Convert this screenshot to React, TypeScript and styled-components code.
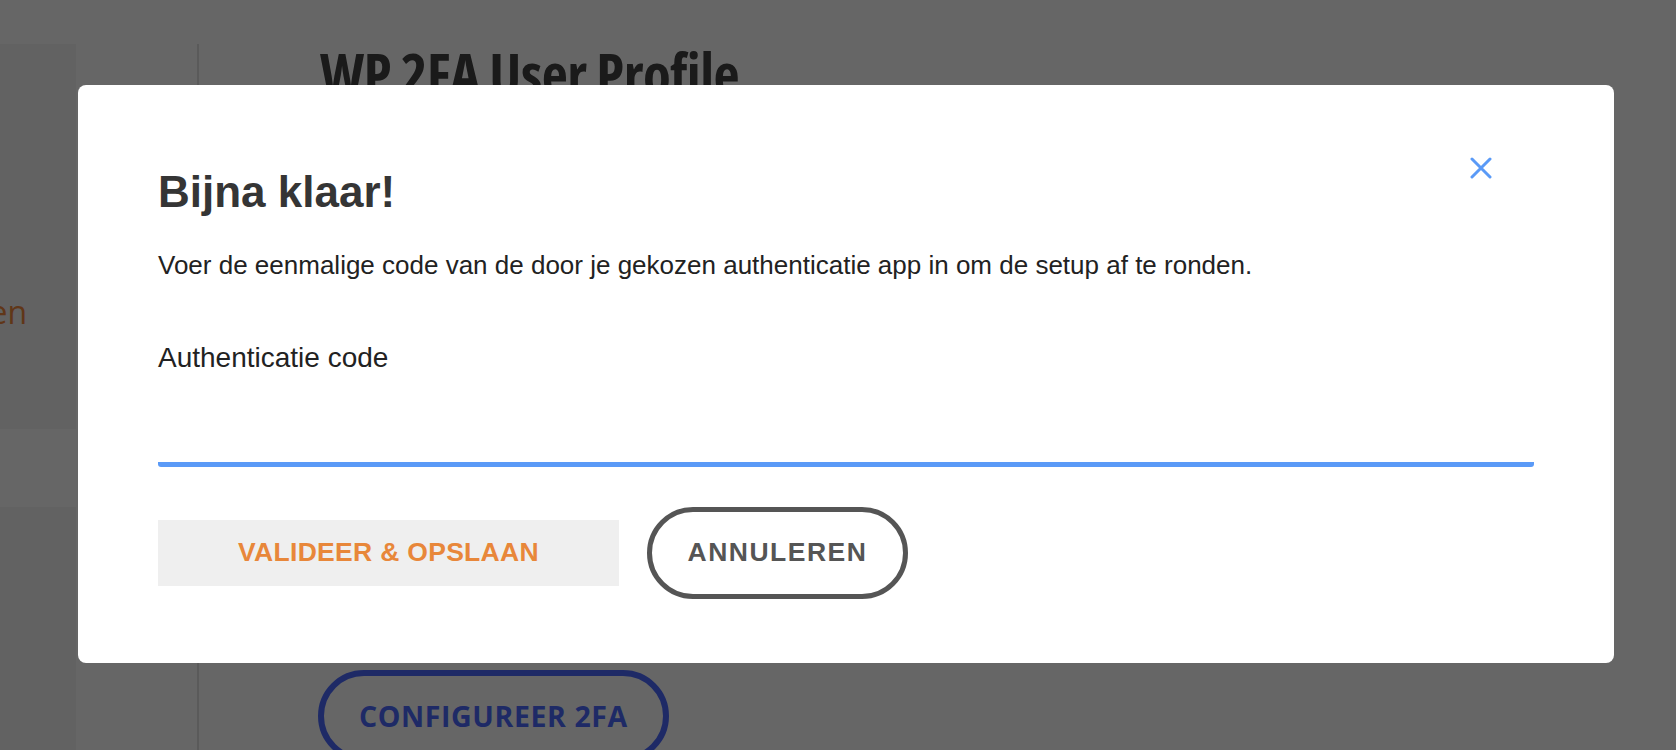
import styled, { createGlobalStyle } from "styled-components";

const GlobalStyle = createGlobalStyle`
    html, body {
        margin: 0;
        padding: 0;
        background: #ffffff;
        overflow: hidden;
    }
    * {
        box-sizing: border-box;
    }
`;

const Page = styled.div`
    display: grid;
    grid-template-columns: 76px 121px 2px 1fr;
    height: 750px;
    overflow: hidden;
    padding-top: 44px;
    font-family: "Open Sans", "Liberation Sans", sans-serif;
`;

const Sidebar = styled.div`
    display: flex;
    flex-direction: column;
    gap: 78px;
`;

const SideCard = styled.div<{ $tall?: boolean }>`
    background: #f5f5f5;
    flex: ${(p) => (p.$tall ? "0 0 385px" : "1 1 auto")};
    overflow: hidden;
    padding-top: 246px;
`;

const SideItem = styled.div`
    display: flex;
    justify-content: flex-end;
    padding-right: 49px;
    white-space: nowrap;
    font-size: 32px;
    color: #f0883e;
`;

const Divider = styled.div`
    grid-column: 3;
    background: #e0e0e0;
`;

const Content = styled.div`
    padding-left: 121px;
    display: flex;
    flex-direction: column;
    align-items: flex-start;
`;

const PageTitle = styled.h1`
    margin: 0;
    font-size: 57px;
    line-height: 1.05;
    font-weight: 700;
    font-stretch: 75%;
    color: #414141;
    letter-spacing: -0.5px;
`;

const OutlineButton = styled.button`
    margin-top: 566px;
    margin-left: -2px;
    height: 92px;
    padding: 0 35px;
    border: 6px solid #4c6aff;
    border-radius: 999px;
    background: transparent;
    font-family: "Open Sans", sans-serif;
    font-size: 28.5px;
    font-weight: 700;
    letter-spacing: 0.6px;
    color: #4c6aff;
`;

const Overlay = styled.div`
    position: fixed;
    inset: 0;
    background: rgba(0, 0, 0, 0.6);
    display: flex;
    align-items: flex-start;
    padding: 85px 0 0 78px;
`;

const Modal = styled.div`
    position: relative;
    width: 1536px;
    background: #ffffff;
    border-radius: 8px;
    padding: 81px 80px 64px 80px;
    display: flex;
    flex-direction: column;
    font-family: "Liberation Sans", Arial, Helvetica, sans-serif;
`;

const CloseButton = styled.button`
    position: absolute;
    top: 63px;
    right: 113px;
    width: 40px;
    height: 40px;
    padding: 0;
    border: none;
    background: transparent;
    display: flex;
    align-items: center;
    justify-content: center;
    cursor: pointer;
`;

const Title = styled.h2`
    margin: 0;
    font-size: 44px;
    line-height: 1.2;
    font-weight: 700;
    color: #353535;
`;

const Description = styled.p`
    margin: 27px 0 0 0;
    font-size: 26px;
    line-height: 1.5;
    color: #222222;
`;

const Label = styled.label`
    display: block;
    margin-top: 52px;
    font-size: 28px;
    line-height: 1.5;
    color: #222222;
`;

const CodeInput = styled.input`
    margin-top: 15px;
    width: 100%;
    height: 73px;
    border: none;
    border-bottom: 5px solid #5a9af7;
    border-radius: 0 0 3px 3px;
    outline: none;
    font-size: 26px;
    font-family: inherit;
    background: transparent;
`;

const ButtonRow = styled.div`
    margin-top: 40px;
    display: flex;
    align-items: center;
    gap: 28px;
`;

const ActionButton = styled.button<{ $variant: "primary" | "ghost" }>`
    font-family: "Liberation Sans", Arial, Helvetica, sans-serif;
    font-weight: 700;
    font-size: 26.5px;
    text-transform: uppercase;
    cursor: pointer;
    ${(p) =>
        p.$variant === "primary"
            ? `
        width: 461px;
        height: 66px;
        border: none;
        background: #efefef;
        color: #e8873a;
        letter-spacing: 0.3px;
    `
            : `
        width: 261px;
        height: 92px;
        border: 5px solid #555555;
        border-radius: 999px;
        background: #ffffff;
        color: #555555;
        letter-spacing: 1.5px;
    `}
`;

function CloseIcon() {
    return (
        <svg width="22" height="22" viewBox="0 0 22 22" fill="none">
            <path d="M2 2 L20 20 M20 2 L2 20" stroke="#5a9af7" strokeWidth="3" strokeLinecap="round" />
        </svg>
    );
}

export default function App() {
    return (
        <>
            <GlobalStyle />
            <Page>
                <Sidebar>
                    <SideCard $tall>
                        <SideItem>Instellingen</SideItem>
                    </SideCard>
                    <SideCard />
                </Sidebar>
                <Divider />
                <Content>
                    <PageTitle>WP 2FA User Profile</PageTitle>
                    <OutlineButton>CONFIGUREER 2FA</OutlineButton>
                </Content>
            </Page>
            <Overlay>
                <Modal>
                    <CloseButton aria-label="Sluiten">
                        <CloseIcon />
                    </CloseButton>
                    <Title>Bijna klaar!</Title>
                    <Description>
                        Voer de eenmalige code van de door je gekozen authenticatie app in om de setup af te ronden.
                    </Description>
                    <Label htmlFor="auth-code">Authenticatie code</Label>
                    <CodeInput id="auth-code" type="text" />
                    <ButtonRow>
                        <ActionButton $variant="primary">Valideer &amp; opslaan</ActionButton>
                        <ActionButton $variant="ghost">Annuleren</ActionButton>
                    </ButtonRow>
                </Modal>
            </Overlay>
        </>
    );
}
